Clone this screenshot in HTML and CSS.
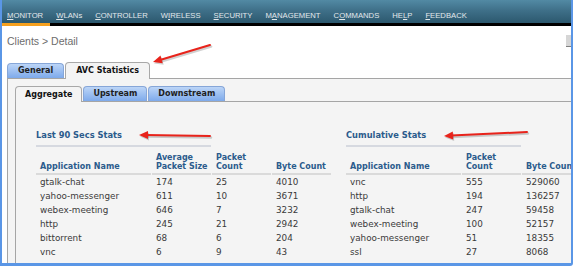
FILE: index.html
```html
<!DOCTYPE html>
<html>
<head>
	<title>Clients &gt; Detail</title>
	<link rel="stylesheet" href="styles.css">
</head>
<body>
	<div class="frame">
		<div class="nav">
			<span class="nav-item active"><u>M</u>ONITOR</span>
			<span class="nav-item"><u>W</u>LANs</span>
			<span class="nav-item"><u>C</u>ONTROLLER</span>
			<span class="nav-item">W<u>I</u>RELESS</span>
			<span class="nav-item"><u>S</u>ECURITY</span>
			<span class="nav-item">M<u>A</u>NAGEMENT</span>
			<span class="nav-item">C<u>O</u>MMANDS</span>
			<span class="nav-item">HE<u>L</u>P</span>
			<span class="nav-item"><u>F</u>EEDBACK</span>
		</div>

		<div class="page">
			<div class="page-head">
				<h1 class="page-title">Clients &gt; Detail</h1>
				<div class="scroll-stub"></div>
			</div>

			<div class="tabs">
				<div class="tab">General</div>
				<div class="tab tab-active">AVC Statistics</div>
			</div>
			<div class="panel">
				<div class="tabs">
					<div class="tab tab-active">Aggregate</div>
					<div class="tab">Upstream</div>
					<div class="tab">Downstream</div>
				</div>
				<div class="subpanel">
					<div class="stats">
						<div class="stats-block">
							<h2 class="stats-title">Last 90 Secs Stats</h2>
							<table class="stats-table">
								<colgroup>
									<col class="col-name">
									<col class="col-num">
									<col class="col-num">
									<col class="col-num">
								</colgroup>
								<tr>
									<th>Application Name</th>
									<th>Average<br>Packet Size</th>
									<th>Packet<br>Count</th>
									<th>Byte Count</th>
								</tr>
								<tr><td>gtalk-chat</td><td>174</td><td>25</td><td>4010</td></tr>
								<tr><td>yahoo-messenger</td><td>611</td><td>10</td><td>3671</td></tr>
								<tr><td>webex-meeting</td><td>646</td><td>7</td><td>3232</td></tr>
								<tr><td>http</td><td>245</td><td>21</td><td>2942</td></tr>
								<tr><td>bittorrent</td><td>68</td><td>6</td><td>204</td></tr>
								<tr><td>vnc</td><td>6</td><td>9</td><td>43</td></tr>
							</table>
						</div>
						<div class="stats-block">
							<h2 class="stats-title">Cumulative Stats</h2>
							<table class="stats-table">
								<colgroup>
									<col class="col-name">
									<col class="col-num">
									<col class="col-num">
								</colgroup>
								<tr>
									<th>Application Name</th>
									<th>Packet<br>Count</th>
									<th>Byte Count</th>
								</tr>
								<tr><td>vnc</td><td>555</td><td>529060</td></tr>
								<tr><td>http</td><td>194</td><td>136257</td></tr>
								<tr><td>gtalk-chat</td><td>247</td><td>59458</td></tr>
								<tr><td>webex-meeting</td><td>100</td><td>52157</td></tr>
								<tr><td>yahoo-messenger</td><td>51</td><td>18355</td></tr>
								<tr><td>ssl</td><td>27</td><td>8068</td></tr>
							</table>
						</div>
					</div>
				</div>
			</div>
		</div>

		<!-- red call-out arrows drawn over the screenshot -->
		<svg class="arrows" width="575" height="266" viewBox="0 0 575 266">
			<g class="arrow-shadow" transform="translate(1,1.5)">
				<line x1="210" y1="45" x2="160" y2="60"/>
				<polygon points="153,62 160.5,55.6 162.7,63.2"/>
				<line x1="210" y1="136" x2="146" y2="135"/>
				<polygon points="139,135 148,131 148,139"/>
				<line x1="527" y1="132" x2="451" y2="135.6"/>
				<polygon points="444,136 452.8,131.6 453.2,139.6"/>
			</g>
			<g class="arrow">
				<line x1="210" y1="45" x2="160" y2="60"/>
				<polygon points="153,62 160.5,55.6 162.7,63.2"/>
				<line x1="210" y1="136" x2="146" y2="135"/>
				<polygon points="139,135 148,131 148,139"/>
				<line x1="527" y1="132" x2="451" y2="135.6"/>
				<polygon points="444,136 452.8,131.6 453.2,139.6"/>
			</g>
		</svg>
	</div>
</body>
</html>
```

FILE: styles.css
```css
body {
	margin: 0;
	padding: 0;
	background-color: #FFFFFF;
	font-family: "DejaVu Sans", Verdana, sans-serif;
}

.frame {
	position: relative;
	box-sizing: border-box;
	width: 573px;
	height: 266px;
	overflow: hidden;
	border-left: 2px solid #5A96E6;
	border-right: 2px solid #5A96E6;
	border-bottom: 3px solid #5A96E6;
	border-bottom-right-radius: 3px;
	background-color: #FFFFFF;
}

/* top menu */

.nav {
	display: flex;
	gap: 13px;
	height: 23px;
	border-bottom: 3px solid #000000;
	background: linear-gradient(#528AA4 0, #3F7089 45%, #2C586E 100%);
}

.nav-item {
	box-sizing: border-box;
	height: 26px;
	margin-bottom: -3px;
	padding-top: 11px;
	font-family: "Liberation Sans", Arial, sans-serif;
	font-size: 7.7px;
	line-height: 10px;
	color: #E2E8EC;
	white-space: nowrap;
}

.nav-item u {
	text-decoration-thickness: 1px;
}

.nav-item.active {
	padding-left: 5px;
	padding-right: 7px;
	margin-right: -7px;
	border-bottom: 3px solid #F5A01E;
}

/* page */

.page {
	padding-left: 5px;
}

.page-head {
	display: flex;
	justify-content: space-between;
	align-items: flex-start;
	margin-top: 9px;
}

.page-title {
	margin: 0;
	font-family: "Liberation Sans", Arial, sans-serif;
	font-size: 10.5px;
	font-weight: normal;
	line-height: 12px;
	color: #6D6D6D;
}

.scroll-stub {
	width: 5px;
	height: 11px;
	background-color: #D6D6D6;
	border-bottom: 1px solid #808080;
}

/* tabs */

.tabs {
	display: flex;
	align-items: flex-end;
	gap: 1px;
}

.page > .tabs {
	margin-top: 15px;
}

.tab {
	box-sizing: border-box;
	height: 15px;
	padding: 0 10px;
	border: 1px solid #86A6D8;
	border-bottom: none;
	border-radius: 4px 4px 0 0;
	background: linear-gradient(#BCD5F7, #7EAAEB);
	font-size: 8px;
	font-weight: bold;
	line-height: 14px;
	color: #1E1E1E;
	white-space: nowrap;
}

.tab-active {
	position: relative;
	z-index: 1;
	height: 17px;
	margin-bottom: -1px;
	border-color: #A8A8A8;
	background: #F4F4F4;
	line-height: 16px;
	color: #111111;
}

.panel {
	padding: 7px 0 0 7px;
	border-top: 1px solid #A5A5A5;
	border-left: 1px solid #A5A5A5;
	background-color: #F4F4F4;
	height: 200px;
}

.panel .tab {
	padding: 0 9px;
}

.panel .tab-active {
	height: 16px;
	line-height: 15px;
}

.subpanel {
	padding: 28px 0 0 20px;
	border-top: 1px solid #A5A5A5;
	border-left: 1px solid #A5A5A5;
	background-color: #F4F4F4;
	height: 200px;
}

/* stats */

.stats {
	display: flex;
}

.stats-block {
	flex: 0 0 310px;
}

.stats-title {
	width: 175px;
	margin: 0;
	padding-bottom: 5px;
	border-bottom: 2px solid #D6D9E0;
	font-size: 8.3px;
	font-weight: bold;
	line-height: 10px;
	color: #2B5B8C;
	white-space: nowrap;
}

.stats-table {
	table-layout: fixed;
	margin-top: 6px;
	margin-left: -1px;
	border-collapse: separate;
	border-spacing: 1px 0;
}

.col-name {
	width: 115px;
}

.col-num {
	width: 59px;
}

.stats-table th {
	padding: 0 0 2px 4px;
	border-bottom: 2px solid #DADADA;
	vertical-align: bottom;
	text-align: left;
	font-size: 8px;
	font-weight: bold;
	line-height: 9px;
	color: #2B5B8C;
	white-space: nowrap;
}

.stats-table td {
	height: 14px;
	padding: 0 0 0 4px;
	font-size: 8.8px;
	line-height: 14px;
	color: #3A3A3A;
	white-space: nowrap;
}

/* call-out arrows */

.arrows {
	position: absolute;
	left: -2px;
	top: 0;
	pointer-events: none;
}

.arrow line {
	stroke: #E8231B;
	stroke-width: 2;
	stroke-linecap: round;
}

.arrow polygon {
	fill: #E8231B;
}

.arrow-shadow line {
	stroke: rgba(0, 0, 0, 0.18);
	stroke-width: 2.5;
	stroke-linecap: round;
}

.arrow-shadow polygon {
	fill: rgba(0, 0, 0, 0.18);
}
```
